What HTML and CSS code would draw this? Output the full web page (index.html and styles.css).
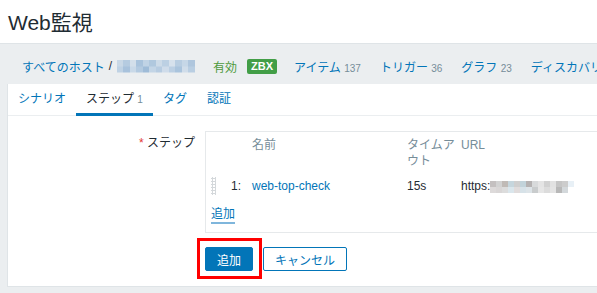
FILE: index.html
```html
<!DOCTYPE html>
<html lang="ja">
<head>
  <meta charset="UTF-8" />
  <meta name="viewport" content="width=device-width, initial-scale=1.0" />
  <title>Web監視</title>
  <link rel="stylesheet" href="styles.css">
</head>
<body>
  <div class="page">
    <header class="page-header">
      <h1>Web監視</h1>
    </header>

    <main class="content">
      <nav class="breadcrumbs">
        <a href="#" class="link">すべてのホスト</a>
        <span class="sep">/</span>
        <span class="blur-host"></span>
        <span class="status-on">有効</span>
        <span class="badge">ZBX</span>
        <a href="#" class="link nav-item">アイテム <sup class="count">137</sup></a>
        <a href="#" class="link nav-item">トリガー <sup class="count">36</sup></a>
        <a href="#" class="link nav-item">グラフ <sup class="count">23</sup></a>
        <a href="#" class="link nav-item">ディスカバリ</a>
      </nav>

      <div class="card">
        <ul class="tabs">
          <li><a href="#">シナリオ</a></li>
          <li class="active"><a href="#">ステップ <sup class="count">1</sup></a></li>
          <li><a href="#">タグ</a></li>
          <li><a href="#">認証</a></li>
        </ul>

        <form class="form">
          <div class="form-row">
            <label class="form-label"><span class="req">*</span> ステップ</label>
            <div class="steps-box">
              <table class="steps">
                <thead>
                  <tr>
                    <th class="col-drag"></th>
                    <th class="col-num"></th>
                    <th class="col-name">名前</th>
                    <th class="col-timeout">タイムアウト</th>
                    <th class="col-url">URL</th>
                  </tr>
                </thead>
                <tbody>
                  <tr>
                    <td class="col-drag"><span class="drag-handle"></span></td>
                    <td class="col-num">1:</td>
                    <td class="col-name"><a href="#" class="link">web-top-check</a></td>
                    <td class="col-timeout">15s</td>
                    <td class="col-url">https:<span class="blur-url"></span></td>
                  </tr>
                </tbody>
              </table>
              <a href="#" class="link-action">追加</a>
            </div>
          </div>

          <div class="form-actions">
            <span class="marked"><button type="button" class="btn btn-primary">追加</button></span>
            <button type="button" class="btn btn-alt">キャンセル</button>
          </div>
        </form>
      </div>
    </main>
  </div>
</body>
</html>
```

FILE: styles.css
```css
:root {
  --link: #0275b8;
  --text: #1f2c33;
  --muted: #768d99;
  --bg: #ebeef0;
  --border: #dfe4e7;
  --green: #429e47;
}

* {
  box-sizing: border-box;
}

html, body {
  margin: 0;
  overflow: hidden;
}

body {
  font-family: "Liberation Sans", "Noto Sans CJK JP", sans-serif;
  font-size: 12px;
  color: var(--text);
  background-color: var(--bg);
}

.page {
  width: 800px;
}

a {
  text-decoration: none;
}

.link {
  color: var(--link);
}

.count {
  font-size: 10px;
  color: var(--muted);
  vertical-align: baseline;
}

/* header */
.page-header {
  height: 44px;
  background-color: #fff;
  border-bottom: 1px solid var(--border);
  display: flex;
  align-items: center;
  padding-left: 8px;
  padding-bottom: 1px;
}

.page-header h1 {
  margin: 0;
  font-size: 21px;
  font-weight: normal;
  color: var(--text);
}

/* breadcrumbs */
.breadcrumbs {
  height: 40px;
  display: flex;
  align-items: center;
  padding: 4px 0 0 15px;
  white-space: nowrap;
}

.sep {
  margin: 0 5px 0 4px;
  color: var(--text);
}

.blur-host {
  display: inline-block;
  width: 78px;
  height: 13px;
  margin-right: 18px;
  background:
    linear-gradient(90deg, #c9d8e6 0 6px, #b5cbe0 6px 13px, #d3dfea 13px 19px, #a9c3dc 19px 26px, #c0d3e5 26px 32px, #b0c8de 32px 39px, #cddbe8 39px 45px, #bcd0e3 45px 52px, #d6e1ec 52px 58px, #b8cde1 58px 65px, #c6d7e7 65px 71px, #afc6dd 71px 78px) top / 100% 50% no-repeat,
    linear-gradient(90deg, #bfd2e4 0 6px, #a8c2dc 6px 13px, #c9d9e8 13px 19px, #b3cae0 19px 26px, #9fbcd8 26px 32px, #c3d5e6 32px 39px, #b7cce1 39px 45px, #cfdcea 45px 52px, #bbcfe3 52px 58px, #aac4dd 58px 65px, #d0ddea 65px 71px, #b9cee2 71px 78px) bottom / 100% 50% no-repeat;
}

.status-on {
  color: #4e9a3c;
  margin-right: 10px;
}

.badge {
  display: inline-block;
  background-color: var(--green);
  color: #fff;
  font-size: 11px;
  font-weight: bold;
  line-height: 15px;
  padding: 0 4px;
  border-radius: 2px;
  margin-right: 17px;
}

.nav-item {
  margin-right: 19px;
}

/* card + tabs */
.content {
  padding-left: 7px;
}

.card {
  background-color: #fff;
  border: 1px solid var(--border);
  border-top: none;
  border-right: none;
}

.tabs {
  list-style: none;
  margin: 0;
  padding: 0;
  display: flex;
  border-bottom: 1px solid var(--bg);
}

.tabs a {
  display: block;
  padding: 1px 10px 0;
  line-height: 29px;
  height: 32px;
  border-bottom: 3px solid transparent;
  margin-bottom: -1px;
  color: var(--link);
}

.tabs li.active a {
  color: var(--text);
  border-bottom-color: var(--link);
}

/* form */
.form {
  padding: 15px 0 15px 0;
}

.form-row {
  display: grid;
  grid-template-columns: 187px 1fr;
  column-gap: 10px;
}

.form-label {
  text-align: right;
  padding-top: 5px;
  line-height: 14px;
}

.req {
  color: #e33734;
}

.steps-box {
  border: 1px solid #e6e9eb;
  border-right: none;
  padding: 5px 0 8px 0;
}

.steps {
  border-collapse: collapse;
  table-layout: fixed;
  width: 380px;
}

.steps th {
  font-weight: normal;
  color: var(--muted);
  text-align: left;
  vertical-align: top;
  line-height: 16px;
  padding: 0 0 6px 0;
}

.steps td {
  height: 22px;
  padding: 0;
  vertical-align: middle;
}

.col-drag {
  width: 22px;
  padding-left: 5px !important;
}

.col-num {
  width: 19px;
  text-align: right;
  padding-right: 6px !important;
}

.col-name {
  width: 155px;
  padding-left: 5px !important;
}

.col-timeout {
  width: 54px;
  padding-left: 5px !important;
}

.col-url {
  width: 130px;
  padding-left: 5px !important;
  white-space: nowrap;
}

.drag-handle {
  display: block;
  width: 5px;
  height: 18px;
  background-image: radial-gradient(circle, #d4d8db 1px, transparent 1.2px);
  background-size: 3px 3px;
}

.blur-url {
  display: inline-block;
  vertical-align: middle;
  width: 90px;
  height: 12px;
  background:
    linear-gradient(90deg, #c4c0c0 0 6px, #d2d2d2 6px 12px, #c0bab6 12px 18px, #c6d6dd 18px 24px, #cfcfcf 24px 30px, #c2d3da 30px 36px, #b5b2b2 36px 42px, #d8dadb 42px 48px, #e4e4e4 48px 54px, #d1d1d1 54px 60px, #e2e2e2 60px 66px, #c5c5c5 66px 72px, #cccccc 72px 78px, #e8f0f6 78px 84px, #fff 84px 90px) top / 100% 50% no-repeat,
    linear-gradient(90deg, #dddada 0 6px, #d9d6d6 6px 12px, #dcdcdc 12px 18px, #dae6ec 18px 24px, #e0dcdc 24px 30px, #d7e2e8 30px 36px, #dde4e8 36px 42px, #c9cccd 42px 48px, #e6e6e6 48px 54px, #dcdcdc 54px 60px, #e4e4e4 60px 66px, #b8b8b8 66px 72px, #d3d8db 72px 78px, #fff 78px 90px) bottom / 100% 50% no-repeat;
}

.link-action {
  display: inline-block;
  margin: 10px 0 0 5px;
  color: var(--link);
  line-height: 14px;
  padding-bottom: 1px;
  border-bottom: 2px solid #7fb6dc;
}

.form-actions {
  display: flex;
  gap: 10px;
  margin: 14px 0 0 197px;
}

.btn {
  height: 24px;
  padding: 0 10px;
  font-family: inherit;
  font-size: 12px;
  border-radius: 2px;
  cursor: pointer;
}

.btn-primary {
  background-color: var(--link);
  border: 1px solid var(--link);
  color: #fff;
  width: 48px;
}

.btn-alt {
  background-color: #fff;
  border: 1px solid var(--link);
  color: var(--link);
  width: 84px;
}

/* red annotation frame drawn over the button */
.marked {
  position: relative;
  display: block;
}

.marked::after {
  content: "";
  position: absolute;
  top: -9px;
  left: -8px;
  right: -9px;
  bottom: -8px;
  border: 3px solid #f00;
  pointer-events: none;
}
```
